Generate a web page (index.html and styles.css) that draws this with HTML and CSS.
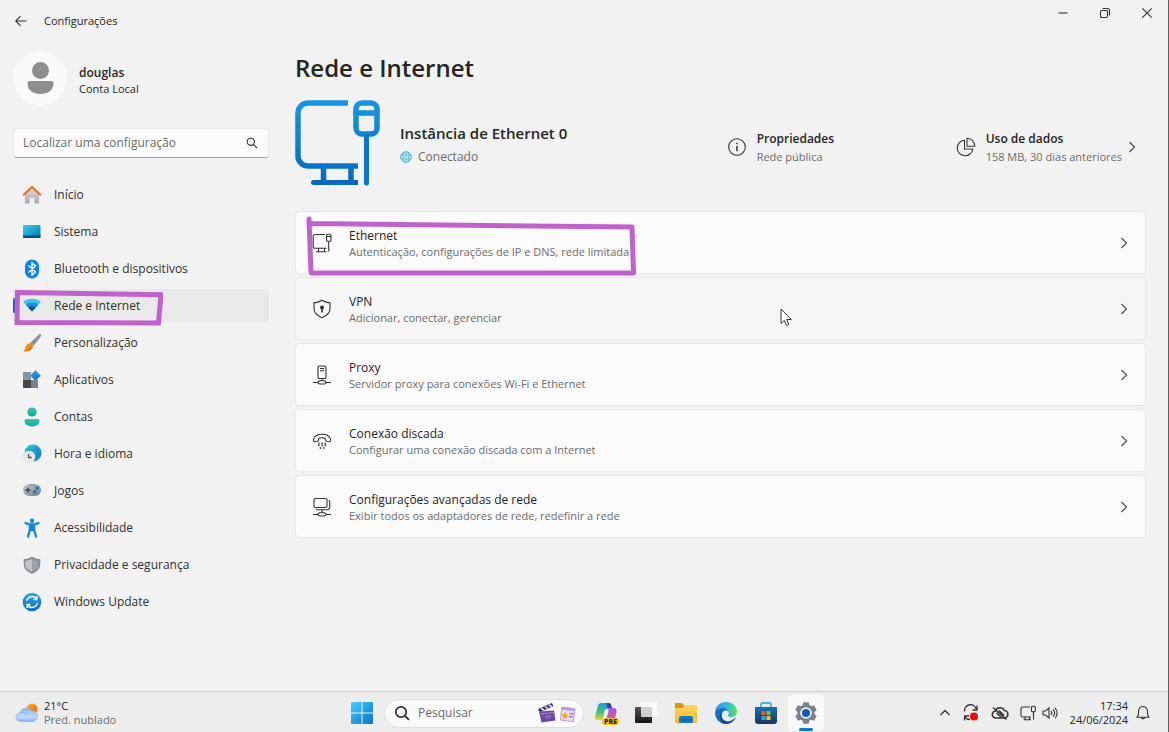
FILE: index.html
```html
<!DOCTYPE html>
<html lang="pt-BR">
<head>
<meta charset="utf-8">
<meta name="viewport" content="width=device-width, initial-scale=1">
<title>Configurações</title>
<link rel="stylesheet" href="styles.css">
</head>
<body>
<svg class="defs" width="0" height="0" aria-hidden="true">
  <defs>
    <linearGradient id="gBlue" x1="0" y1="0" x2="0" y2="1"><stop offset="0" stop-color="#2aa7ea"/><stop offset="1" stop-color="#0a6cc4"/></linearGradient>
    <linearGradient id="gHero" gradientUnits="userSpaceOnUse" x1="0" y1="0" x2="0" y2="86"><stop offset="0" stop-color="#1597e5"/><stop offset="1" stop-color="#0668bd"/></linearGradient>
    <linearGradient id="gCyan" x1="0" y1="0" x2="1" y2="1"><stop offset="0" stop-color="#35d6e4"/><stop offset="1" stop-color="#0a70b8"/></linearGradient>
    <linearGradient id="gGray" x1="0" y1="0" x2="0" y2="1"><stop offset="0" stop-color="#dcdcdc"/><stop offset="1" stop-color="#a9a9a9"/></linearGradient>
    <linearGradient id="gOrange" x1="0" y1="0" x2="1" y2="1"><stop offset="0" stop-color="#ffb42e"/><stop offset="1" stop-color="#e2600e"/></linearGradient>
    <linearGradient id="gTeal" x1="0" y1="0" x2="0" y2="1"><stop offset="0" stop-color="#2cc9b4"/><stop offset="1" stop-color="#14a88f"/></linearGradient>
    <linearGradient id="gShield" x1="0" y1="0" x2="1" y2="1"><stop offset="0" stop-color="#c9cdd1"/><stop offset="1" stop-color="#747a80"/></linearGradient>
    <linearGradient id="gCloud" x1="0" y1="0" x2="0" y2="1"><stop offset="0" stop-color="#8fb8f2"/><stop offset=".7" stop-color="#c3dafb"/><stop offset="1" stop-color="#7faaf0"/></linearGradient>
    <linearGradient id="gWin" x1="0" y1="0" x2="1" y2="1"><stop offset="0" stop-color="#48ccfb"/><stop offset="1" stop-color="#0573ce"/></linearGradient>
    <linearGradient id="gFolder" x1="0" y1="0" x2="0" y2="1"><stop offset="0" stop-color="#ffd55c"/><stop offset="1" stop-color="#fbbd2b"/></linearGradient>
    <linearGradient id="gEdge" x1="0" y1="0" x2="1" y2="0"><stop offset="0" stop-color="#1b8fdd"/><stop offset=".55" stop-color="#2bbfd9"/><stop offset="1" stop-color="#5ddf5a"/></linearGradient>
    <linearGradient id="gStore" x1="0" y1="0" x2="0" y2="1"><stop offset="0" stop-color="#1b6fb5"/><stop offset="1" stop-color="#1b355f"/></linearGradient>
    <linearGradient id="gCopA" x1="0" y1="0" x2="0" y2="1"><stop offset="0" stop-color="#1c9fe0"/><stop offset=".55" stop-color="#3fc07a"/><stop offset="1" stop-color="#f3d524"/></linearGradient>
    <linearGradient id="gCopB" x1="0" y1="0" x2="0" y2="1"><stop offset="0" stop-color="#a458e8"/><stop offset="1" stop-color="#f2567b"/></linearGradient>
    <linearGradient id="gDark" x1="0" y1="0" x2="0" y2="1"><stop offset="0" stop-color="#555"/><stop offset="1" stop-color="#151515"/></linearGradient>
  </defs>
</svg>

<div class="window">
  <header class="titlebar">
    <div class="titlebar-left">
      <button class="icon-btn" aria-label="Voltar"><svg width="12" height="12" viewBox="0 0 12 12" class="line"><path d="M11.500 6H.8M5.500 1.200.7 6l4.800 4.800"/></svg></button>
      <span class="app-title">Configurações</span>
    </div>
    <div class="controls">
      <button class="icon-btn" aria-label="Minimizar"><svg width="12" height="12" viewBox="0 0 12 12" class="line"><path d="M1.500 6h9"/></svg></button>
      <button class="icon-btn" aria-label="Restaurar"><svg width="12" height="12" viewBox="0 0 12 12" class="line"><rect x="1.500" y="3.500" width="7" height="7" rx="1.200"/><path d="M3.500 1.500H8.300a2.200 2.200 0 0 1 2.200 2.200V8.500"/></svg></button>
      <button class="icon-btn" aria-label="Fechar"><svg width="12" height="12" viewBox="0 0 12 12" class="line"><path d="M1.300 1.300l9.400 9.400M10.700 1.300l-9.400 9.400"/></svg></button>
    </div>
  </header>

  <div class="content">
    <aside class="sidebar">
      <div class="account">
        <svg width="54" height="54" viewBox="0 0 54 54" aria-hidden="true"><circle cx="27" cy="27" r="27" fill="#fafafa"/><circle cx="27.500" cy="19.500" r="8.500" fill="#8e8e8e"/><path d="M17 30h21a2.500 2.500 0 0 1 2.500 2.500C40.500 39 35 43 27.500 43s-13-4-13-10.500a2.500 2.500 0 0 1 2.500-2.500z" fill="#8e8e8e"/></svg>
        <div class="user"><div class="user-name">douglas</div><div class="user-kind">Conta Local</div></div>
      </div>
      <label class="search">
        <input type="text" placeholder="Localizar uma configuração" aria-label="Localizar uma configuração">
        <svg width="12" height="12" viewBox="0 0 12 12" class="line"><circle cx="4.800" cy="4.800" r="3.600"/><path d="M7.500 7.500l3.600 3.600"/></svg>
      </label>
      <nav class="nav">
        <a href="#"><svg width="20" height="20" viewBox="0 0 20 20"><path d="M3 9l7-6.500L17 9v9.500h-4.500V13h-5v5.500H3z" fill="url(#gGray)"/><path d="M1.700 9.800L10 2l8.300 7.800" fill="none" stroke="#e8691a" stroke-width="2" stroke-linecap="round" stroke-linejoin="round"/></svg>Início</a>
        <a href="#"><svg width="20" height="20" viewBox="0 0 20 20"><rect x="1" y="3" width="17.500" height="13" rx="1" fill="url(#gCyan)"/><path d="M1 13.500h17.500V15a1 1 0 0 1-1 1H2a1 1 0 0 1-1-1z" fill="#0b4d78"/></svg>Sistema</a>
        <a href="#"><svg width="20" height="20" viewBox="0 0 20 20"><rect x="3" y=".5" width="14" height="19" rx="7" fill="#0a84f5"/><path d="M6.500 6.500l7 6.500-3.500 3.300V3.700L13.500 7l-7 6.500" fill="none" stroke="#fff" stroke-width="1.400" stroke-linejoin="round"/></svg>Bluetooth e dispositivos</a>
        <a href="#" class="active" aria-current="page"><svg width="20" height="20" viewBox="0 1 20 20"><path d="M10 16.500L1.200 7C6 2.600 14 2.600 18.800 7z" fill="#3cc4ee"/><path d="M10 16.500L3.800 9.700c3.600-3 8.800-3 12.400 0z" fill="#148fd8"/><path d="M10 16.500L6.500 12.600c2-1.700 5-1.700 7 0z" fill="#0b559f"/></svg>Rede e Internet
          <svg class="mark" width="150" height="38" viewBox="0 0 150 38" aria-hidden="true"><path d="M4.500 4.500L148 6.800 145.500 35 4 34.500z" fill="none" stroke="#c062cc" stroke-width="5"/></svg></a>
        <a href="#"><svg width="20" height="20" viewBox="0 0 20 20"><path d="M18.800 1.300c.8.800 0 2-.6 2.900L11.500 13 8.200 9.900l7.700-7.500c.9-.9 2.200-1.700 2.900-1.100z" fill="#8b9199"/><path d="M7.500 10.300c1.800.1 3.500 1.700 3.500 3.300-.4 3.400-4.400 5.800-10 4.700 2.200-1 1.900-2.600 2.600-4.700.6-1.900 2-3.300 3.900-3.300z" fill="url(#gOrange)"/></svg>Personalização</a>
        <a href="#"><svg width="20" height="20" viewBox="0 0 20 20"><path d="M2 2h7v8H1V3a1 1 0 0 1 1-1z" fill="#8b9299"/><path d="M1 10h8v8H2a1 1 0 0 1-1-1z" fill="#41474d"/><path d="M9 10h7v7a1 1 0 0 1-1 1H9z" fill="#7b8289"/><path d="M13.500.7l5 5-5 5-5-5z" fill="url(#gBlue)" stroke="#2aa7ea" stroke-linejoin="round"/></svg>Aplicativos</a>
        <a href="#"><svg width="20" height="20" viewBox="0 0 20 20"><circle cx="10" cy="5" r="4.600" fill="url(#gTeal)"/><path d="M4.500 12h11a2 2 0 0 1 2 2c0 3.500-3.200 5.400-7.500 5.400S2.500 17.500 2.500 14a2 2 0 0 1 2-2z" fill="url(#gTeal)"/></svg>Contas</a>
        <a href="#"><svg width="20" height="20" viewBox="0 0 20 20"><circle cx="11" cy="9" r="8.500" fill="url(#gCyan)"/><path d="M3 6h16M3 12h16M8 1.500c-2 5-2 10 0 15M14 1.500c2.500 5 2.500 10 0 15" stroke="#178fcb" stroke-width=".8" fill="none"/><circle cx="7" cy="13" r="6.300" fill="#e8e8e8"/><path d="M6.600 10v3.500h3" stroke="#555" stroke-width="1.300" fill="none"/></svg>Hora e idioma</a>
        <a href="#"><svg width="20" height="20" viewBox="0 0 20 20"><rect x="1" y="3" width="18" height="12" rx="6" fill="url(#gShield)"/><path d="M6 6.500v5M3.500 9h5" stroke="#3d4248" stroke-width="1.300"/><path d="M8 4h1M11 4h1" stroke="#3d4248"/><circle cx="15" cy="7" r="1.700" fill="#0c74cc"/><circle cx="12.800" cy="11" r="1.700" fill="#0c74cc"/></svg>Jogos</a>
        <a href="#"><svg width="20" height="20" viewBox="0 0 20 20"><circle cx="10" cy="2.700" r="2.200" fill="#1484da"/><path d="M3.500 5c2 1.200 4.200 1.400 6.500 1.400S14.500 6.200 16.500 5M7.900 7v5L6 18.500M12.100 7v5l1.900 6.500" stroke="#1484da" stroke-width="2.300" fill="none" stroke-linecap="round" stroke-linejoin="round"/><path d="M7.500 6.500h5V13h-5z" fill="#1484da"/></svg>Acessibilidade</a>
        <a href="#"><svg width="20" height="20" viewBox="0 0 20 20"><path d="M10 1.500c2.600 1.800 5.300 2.600 8.300 2.700V9c0 4.500-3 7.600-8.300 9.800C4.700 16.600 1.700 13.500 1.700 9V4.200C4.700 4.100 7.400 3.300 10 1.500z" fill="#858b91"/><path d="M10 3.400v13.500C5.400 15 3.200 12.500 3.200 9V5.700C5.700 5.500 8 4.800 10 3.400z" fill="#bec3c8"/><path d="M10 3.400v13.500c4.600-1.900 6.800-4.400 6.800-7.900V5.700c-2.500-.2-4.800-.9-6.800-2.300z" fill="#9da3a9"/></svg>Privacidade e segurança</a>
        <a href="#"><svg width="20" height="20" viewBox="0 0 20 20"><circle cx="10" cy="10" r="9.300" fill="url(#gBlue)"/><path d="M4.800 9A5.300 5.300 0 0 1 14.500 7M15.200 11A5.300 5.300 0 0 1 5.500 13M14.800 4v3.400h-3.400M5.200 16v-3.400h3.400" fill="none" stroke="#fff" stroke-width="1.500"/></svg>Windows Update</a>
      </nav>
    </aside>

    <main class="main">
      <h1>Rede e Internet</h1>
      <section class="hero">
        <svg width="86" height="86" viewBox="0 0 86 86" aria-hidden="true"><g fill="none" stroke="url(#gHero)" stroke-width="5.500"><path d="M53 3H13A10 10 0 0 0 3 13V56A10 10 0 0 0 13 66H63M28.500 66V82M56 66V82"/><rect x="61" y="3" width="21" height="31" rx="6"/><path d="M61 14v-1H82v1"/></g><path d="M71.500 36V83" stroke="#0876cb" stroke-width="5" stroke-linecap="round"/><path d="M19 82.500H63" stroke="#0769be" stroke-width="5"/><path d="M18.500 82.500H21" stroke="#0769be" stroke-width="5" stroke-linecap="round"/></svg>
        <div class="hero-name">
          <h2>Instância de Ethernet 0</h2>
          <p><svg width="12" height="12" viewBox="0 0 12 12" aria-hidden="true"><circle cx="6" cy="6" r="5.300" fill="#bfeee5" stroke="#48b3d6"/><path d="M.8 4h10.400M.8 8h10.400M6 .7v10.600M4 1c-1.300 3-1.300 7 0 10M8 1c1.300 3 1.300 7 0 10" fill="none" stroke="#48b3d6" stroke-width=".7"/></svg>Conectado</p>
        </div>
        <button class="fact">
          <svg width="20" height="20" viewBox="0 0 20 20" class="line"><circle cx="10" cy="10" r="8.300"/><path d="M10 9v5.200M10 5.800v1.400" stroke-width="1.500"/></svg>
          <span><strong>Propriedades</strong><small>Rede pública</small></span>
        </button>
        <button class="fact">
          <svg width="20" height="20" viewBox="0 0 20 20" class="line"><path d="M8.500 3.200A7.800 7.800 0 1 0 16.800 12H8.500z"/><path d="M11 1.300V9.300h7.800A7.800 7.800 0 0 0 11 1.300z"/></svg>
          <span><strong>Uso de dados</strong><small>158 MB, 30 dias anteriores</small></span>
          <svg width="8" height="12" viewBox="0 0 8 12" class="chev"><path d="M1.500 1l5 5-5 5"/></svg>
        </button>
      </section>

      <section class="cards">
        <button class="card">
          <svg width="20" height="20" viewBox="0 0 20 20" class="line"><path d="M13 1.500H3A1.800 1.800 0 0 0 1.200 3.300V13.500A1.800 1.800 0 0 0 3 15.300H14.500M6.500 15.300v3.500M12.500 15.300v3.500M4 18.800H14.500M16.700 8.500v10"/><rect x="14.500" y="1.200" width="4.500" height="7" rx="1.300"/><path d="M14.500 3.500H19"/></svg>
          <span class="card-text"><b>Ethernet</b><small>Autenticação, configurações de IP e DNS, rede limitada</small></span>
          <svg width="8" height="12" viewBox="0 0 8 12" class="chev"><path d="M1.500 1l5 5-5 5"/></svg>
          <svg class="mark-wide" width="332" height="66" viewBox="0 0 332 66" aria-hidden="true"><path d="M5 7L7 60M7 11.500L328 15M328 15L329.500 60M7.500 61H329.500" fill="none" stroke="#c062cc" stroke-width="5" stroke-linecap="round"/></svg>
        </button>
        <button class="card hover">
          <svg width="20" height="20" viewBox="0 0 20 20" class="line"><path d="M10 1.300c2.500 1.700 5 2.500 8 2.600V9.500c0 4.300-3 7.200-8 9.200-5-2-8-4.900-8-9.200V3.900c3-.1 5.500-.9 8-2.600z"/><circle cx="10" cy="8.500" r="1.400" fill="#222"/><path d="M10 8.500v5" stroke-width="1.600"/></svg>
          <span class="card-text"><b>VPN</b><small>Adicionar, conectar, gerenciar</small></span>
          <svg width="8" height="12" viewBox="0 0 8 12" class="chev"><path d="M1.500 1l5 5-5 5"/></svg>
          <svg class="cursor" width="13" height="19" viewBox="0 0 13 19" aria-hidden="true"><path d="M1 1v14.500l3.300-3.100 2.200 5.100 2.300-1-2.200-5h4.700z" fill="#fff" stroke="#333" stroke-linejoin="round"/></svg>
        </button>
        <button class="card">
          <svg width="20" height="20" viewBox="0 0 20 20" class="line"><rect x="6" y="1" width="8" height="12.500" rx="1.300"/><path d="M8 3.500h4M8 5.700h4M10 13.500v2.500M1 17.500h4.500M14.500 17.500H19"/><path d="M5.500 17.500l2-1.700h5l2 1.700-2 1.500h-5z"/></svg>
          <span class="card-text"><b>Proxy</b><small>Servidor proxy para conexões Wi-Fi e Ethernet</small></span>
          <svg width="8" height="12" viewBox="0 0 8 12" class="chev"><path d="M1.500 1l5 5-5 5"/></svg>
        </button>
        <button class="card">
          <svg width="20" height="20" viewBox="0 0 20 20" class="line"><path d="M1.500 8.200C2.500 5 6 3.300 10 3.300s7.500 1.700 8.500 4.900c.3 1.400-.2 2.600-1.500 2.600l-2-.3c-1-.2-1.500-.8-1.600-1.700l-.2-1.500c-2.200-.7-4.200-.7-6.400 0l-.2 1.500c-.1.900-.6 1.500-1.600 1.700l-2 .3c-1.300 0-1.800-1.200-1.500-2.600z"/><path d="M6 12.500h1.500M9.300 12.500h1.500M12.500 12.500H14M6 14.500h1.500M9.300 14.500h1.500M12.500 14.500H14M7.700 17h1.500M11 17h1.500" stroke-width="1.400"/></svg>
          <span class="card-text"><b>Conexão discada</b><small>Configurar uma conexão discada com a Internet</small></span>
          <svg width="8" height="12" viewBox="0 0 8 12" class="chev"><path d="M1.500 1l5 5-5 5"/></svg>
        </button>
        <button class="card">
          <svg width="20" height="20" viewBox="0 0 20 20" class="line"><rect x="2" y="1.500" width="13" height="9" rx="1.500"/><path d="M16.700 3.300c.8.300 1 .8 1 1.500v5.500a2.500 2.500 0 0 1-2.500 2.500H5.500c-.8 0-1.200-.3-1.500-.8M10 13v3M1 17.500h4.500M14.500 17.500H19"/><path d="M5.500 17.500l2-1.700h5l2 1.700-2 1.500h-5z"/></svg>
          <span class="card-text"><b>Configurações avançadas de rede</b><small>Exibir todos os adaptadores de rede, redefinir a rede</small></span>
          <svg width="8" height="12" viewBox="0 0 8 12" class="chev"><path d="M1.500 1l5 5-5 5"/></svg>
        </button>
      </section>
    </main>
  </div>
</div>

<footer class="taskbar">
  <button class="weather">
    <svg width="24" height="24" viewBox="0 0 24 24" aria-hidden="true"><circle cx="17" cy="8" r="5.500" fill="url(#gOrange)"/><path d="M5.500 20.500a4.500 4.500 0 0 1-.3-9A6 6 0 0 1 16 9.800a5.400 5.400 0 0 1 2.200 10.700z" fill="url(#gCloud)" stroke="#86aeed" stroke-width=".6"/><path d="M5.500 11.500c2.500-.6 4.700.3 6 2.300" stroke="#86aeed" stroke-width=".8" fill="none"/></svg>
    <span><b>21°C</b><small>Pred. nublado</small></span>
  </button>
  <div class="apps">
    <button class="app" aria-label="Iniciar"><svg width="24" height="24" viewBox="0 0 24 24"><path d="M1 2a1 1 0 0 1 1-1h9.500v10.500H1zM12.500 1H22a1 1 0 0 1 1 1v9.500H12.500zM1 12.500h10.500V23H2a1 1 0 0 1-1-1zM12.500 12.500H23V22a1 1 0 0 1-1 1h-9.500z" fill="url(#gWin)"/></svg></button>
    <label class="task-search">
      <svg width="16" height="16" viewBox="0 0 16 16" class="line"><circle cx="7" cy="7" r="5.200" stroke-width="1.700"/><path d="M10.700 10.700l4.300 4" stroke-width="1.900"/></svg>
      <input type="text" placeholder="Pesquisar" aria-label="Pesquisar">
      <svg width="40" height="22" viewBox="0 0 40 22" aria-hidden="true"><path d="M2 9.500l15-1 1.500 10-14 2z" fill="#6a4a9c"/><path d="M1 7l14-6 1.500 3.200-14 6z" fill="#4a3277"/><path d="M4 6.200l3 2M8 4.500l3 2M12 2.800l3 2" stroke="#efe6fb" stroke-width="1.400"/><path d="M3.500 12l14-1.500" stroke="#a98bd8"/><path d="M8 15l6-.8" stroke="#8a6cc0" stroke-width="3"/><path d="M25 5l13 1.700-1.700 13L23.500 18z" fill="#e9dcf7" stroke="#b79bdb"/><path d="M25 5l13 1.700-.3 2.500-13-1.700z" fill="#b79bdb"/><path d="M32.500 11.500l4 .5M32 14.500l4 .5" stroke="#9c7bcb" stroke-width="1.300"/><path d="M28 10l1.200 2.200 2.400.4-1.700 1.800.3 2.400-2.200-1-2.200 1 .3-2.400-1.700-1.800 2.400-.4z" fill="#f6a817"/></svg>
    </label>
    <button class="app" aria-label="Copilot"><svg width="24" height="24" viewBox="0 0 24 24"><path d="M7.500 2H14c2 0 2.500 1.300 3 3l1 3h-4.500c-1.600 0-2.500.6-3 2.500L9 17c-.5 1.500-1 2-2.700 2H4c-2.500 0-3.500-1.500-2.800-4L3.800 5C4.400 3 5.500 2 7.500 2z" fill="url(#gCopA)"/><path d="M12 2h2.500c2 0 2.500 1.300 3 3l1 3H14z" fill="#2745b7"/><path d="M14 7h5.500c2.500 0 3.500 1.500 2.900 4l-1.600 7.500c-.4 2-1.500 3.500-3.500 3.500H10c1.300-.3 1.800-1.300 2.200-2.800L14.500 10z" fill="url(#gCopB)"/></svg><span class="tag">PRE</span></button>
    <button class="app" aria-label="Visão de Tarefas"><svg width="24" height="24" viewBox="0 0 24 24"><rect x="1" y="6" width="17" height="16" rx="1" fill="url(#gDark)"/><rect x="7" y="1.500" width="16" height="14.500" rx="1" fill="#fafafa"/><rect x="7" y="6" width="11" height="10" fill="#cfcfcf"/></svg></button>
    <button class="app" aria-label="Explorador de Arquivos"><svg width="24" height="24" viewBox="0 0 24 24"><path d="M1 3a1 1 0 0 1 1-1h6l2 2.500V8H1z" fill="#dc9510"/><path d="M1 7h8l2-3h11a1 1 0 0 1 1 1v16a1 1 0 0 1-1 1H2a1 1 0 0 1-1-1z" fill="url(#gFolder)"/><path d="M5 22v-5a2 2 0 0 1 2-2h10a2 2 0 0 1 2 2v5z" fill="#1779c3"/><path d="M7.500 19h9" stroke="#0b5c9e" stroke-width="1.500"/></svg></button>
    <button class="app" aria-label="Microsoft Edge"><svg width="24" height="24" viewBox="0 0 24 24"><path d="M1 12C1 5.500 6 1 12 1s11 4.200 11 9.500c0 3.500-2.700 5.500-5.700 5.500-2 0-3.500-.8-3.500-1.600 0-.7 1-1.100 1-2.700C14.800 9 12.500 7 9.500 7 5 7 1.500 9.500 1 12z" fill="url(#gEdge)"/><path d="M1 12c.5-3 4-5 8.500-5 3 0 5.300 2 5.300 4.200-.5-1-1.500-1.700-2.900-1.700-2.500 0-4.400 2-4.400 4.700 0 4.500 4.500 7.500 9 6.600C15 22 13.500 23 12 23 6 23 1 18 1 12z" fill="#1370ca"/><path d="M7.500 14.200c0 4.500 4.200 6.800 8.500 5.800 2-.5 3.600-1.600 5-3 .4-.4.8 0 .5.500C19.500 21 16 23 12 23c-4 0-6.500-3.600-6.500-7.500 0-2.500 1.700-5 4-5.500-1.200.8-2 2.500-2 4.200z" fill="#114c9b"/></svg></button>
    <button class="app" aria-label="Microsoft Store"><svg width="24" height="24" viewBox="0 0 24 24"><path d="M7 6V3.500A1.500 1.500 0 0 1 8.500 2h7A1.500 1.500 0 0 1 17 3.500V6" stroke="#35b8ef" stroke-width="1.800" fill="none"/><path d="M1 6h22v14a3 3 0 0 1-3 3H4a3 3 0 0 1-3-3z" fill="url(#gStore)"/><path d="M7.500 10h4v4h-4z" fill="#f0552a"/><path d="M12.500 10h4v4h-4z" fill="#82bd25"/><path d="M7.500 15h4v4h-4z" fill="#23a9ec"/><path d="M12.500 15h4v4h-4z" fill="#fdbb1d"/></svg></button>
    <button class="app current" aria-label="Configurações"><svg width="24" height="24" viewBox="0 0 24 24"><g fill="#78818a"><circle cx="12" cy="12" r="8.500"/><path id="tooth" d="M9.300 1.200h5.400l1 5H8.300zM9.300 22.800h5.400l1-5H8.300z"/><use href="#tooth" transform="rotate(60 12 12)"/><use href="#tooth" transform="rotate(120 12 12)"/></g><circle cx="12" cy="12" r="5.800" fill="#f3f6f9"/><circle cx="12" cy="12" r="4" fill="#0d5cad"/></svg></button>
  </div>
  <div class="tray">
    <button class="icon-btn" aria-label="Mostrar ícones ocultos"><svg width="12" height="12" viewBox="0 0 12 12" class="line"><path d="M1.500 8L6 3.500 10.500 8" stroke-width="1.300"/></svg></button>
    <button class="icon-btn" aria-label="Atualização"><svg width="18" height="18" viewBox="0 0 18 18" class="line"><path d="M2.500 7.500A6 6 0 0 1 14.500 6M15 1.500V6h-4.500M2.500 16.500V12H7M2.500 12.500A6 6 0 0 0 8 15.500" stroke-width="1.300"/><circle cx="12" cy="12.500" r="4" fill="#f80808" stroke="none"/></svg></button>
    <button class="icon-btn" aria-label="OneDrive"><svg width="18" height="18" viewBox="0 0 18 18" class="line"><path d="M5 14a3.500 3.500 0 0 1-.5-7A4.700 4.700 0 0 1 13.300 6.500 3.700 3.700 0 0 1 13 14z" stroke-width="1.600"/><path d="M2 3.500L15.500 15.500M5.500 9l5 4.500M8 6.500l5 5" stroke-width="1.500"/></svg></button>
    <button class="icon-btn pair" aria-label="Rede e volume"><svg width="16" height="16" viewBox="0 0 16 16" class="line"><path d="M10 2H2.500A1.500 1.500 0 0 0 1 3.500v7A1.500 1.500 0 0 0 2.500 12H11M5 12v2.500M9.500 12v2.500M3.500 14.700H11M13.500 7v7.500"/><rect x="11.500" y="1.200" width="3.800" height="5.500" rx="1"/></svg><svg width="16" height="16" viewBox="0 0 16 16" class="line"><path d="M1 6h2.500L7 3v10L3.500 10H1zM9 6c1 1.200 1 2.800 0 4M11 4.300c2 2.200 2 5.200 0 7.400M13 2.800c2.800 3 2.800 7.400 0 10.400"/></svg></button>
    <button class="clock"><span>17:34</span><span>24/06/2024</span></button>
    <button class="icon-btn" aria-label="Notificações"><svg width="14" height="16" viewBox="0 0 14 16" class="line"><path d="M7 1.500A4.500 4.500 0 0 0 2.500 6v3.500L1 12.300h12L11.500 9.500V6A4.500 4.500 0 0 0 7 1.500zM5.300 12.500a1.800 1.800 0 0 0 3.400 0"/></svg></button>
  </div>
</footer>
</body>
</html>
```
FILE: styles.css
```css
* { box-sizing: border-box; }

body {
  margin: 0;
  min-height: 100vh;
  display: flex;
  flex-direction: column;
  background: #f2f2f2;
  border-right: 1px solid #5f5f5f;
  color: #252525;
  font: 12px/16px "Open Sans", "Noto Sans", sans-serif;
}

button, input {
  font: inherit;
  color: inherit;
  background: none;
  border: 0;
  padding: 0;
  margin: 0;
}

button { text-align: left; }
h1, h2, p { margin: 0; }
svg { flex: none; display: block; }
small { font-size: 11px; color: #6c6c6c; }
b { font-weight: 400; }

.defs { position: absolute; }
.line { fill: none; stroke: #333; stroke-width: 1.1; }
.chev { fill: none; stroke: #555; stroke-width: 1.3; }

.window { flex: 1; display: flex; flex-direction: column; }

.titlebar {
  display: flex;
  justify-content: space-between;
  height: 42px;
  padding: 0 15px;
}
.titlebar-left { display: flex; align-items: center; gap: 17px; }
.app-title { font-size: 11px; }
.controls { display: flex; gap: 30px; height: 26px; align-items: center; }
.icon-btn { display: flex; align-items: center; }

.content { flex: 1; display: flex; gap: 26px; padding: 0 22px 0 13px; }

.sidebar { width: 256px; flex: none; padding-top: 9px; }
.account { display: flex; align-items: center; gap: 12px; }
.user { padding-top: 5px; }
.user-name { font-weight: 600; }
.user-kind { font-size: 11px; }

.search {
  display: flex;
  align-items: center;
  height: 30px;
  margin: 23px 0 20px;
  padding: 0 10px 0 9px;
  background: #fbfbfb;
  border: 1px solid #e6e6e6;
  border-bottom-color: #a0a0a0;
  border-radius: 4px;
}
input { flex: 1; min-width: 0; outline: 0; }
input::placeholder { color: #6b6b6b; opacity: 1; }

.nav { display: flex; flex-direction: column; gap: 4px; }
.nav a {
  position: relative;
  display: flex;
  align-items: center;
  gap: 12px;
  height: 33px;
  padding: 0 9px;
  border-radius: 4px;
  color: #303030;
  text-decoration: none;
}
.nav .active { background: #e9e9e9; }
.nav .active::before {
  content: "";
  position: absolute;
  left: 0;
  top: 9px;
  width: 3px;
  height: 15px;
  border-radius: 2px;
  background: #0067c0;
}
.mark { position: absolute; left: 0; top: -1px; }

.main { flex: 1; min-width: 0; padding-top: 10px; }
h1 { font-size: 24px; line-height: 32px; font-weight: 600; }

.hero {
  display: grid;
  grid-template-columns: auto 1fr 229px auto;
  align-items: center;
  margin: 16px 0 25px;
  padding-right: 10px;
}
.hero-name { padding-left: 19px; }
h2 { font-size: 15px; line-height: 22px; font-weight: 600; }
.hero-name p { display: flex; align-items: center; gap: 6px; margin-top: 5px; color: #6c6c6c; }
.fact { display: flex; align-items: center; gap: 6px; padding-top: 8px; }
.fact span { padding-left: 4px; }
.fact strong, .fact small { display: block; }
.fact strong { font-weight: 600; line-height: 20px; }

.cards { display: flex; flex-direction: column; gap: 3px; }
.card {
  position: relative;
  display: flex;
  align-items: center;
  gap: 17px;
  min-height: 63px;
  padding: 8px 17px 8px 16px;
  background: #fbfbfb;
  border: 1px solid #e8e8e8;
  border-radius: 4px;
}
.card.hover { background: #f6f6f6; }
.card-text { flex: 1; padding-top: 3px; }
.card-text b, .card-text small { display: block; }
.mark-wide { position: absolute; left: 8px; top: 0; }
.cursor { position: absolute; left: 57%; top: 30px; }

.taskbar {
  display: grid;
  grid-template-columns: 1fr auto 1fr;
  align-items: center;
  height: 41px;
  padding: 2px 15px 0 15px;
  background: #ededed;
  border-top: 1px solid #cfcfcf;
}
.weather { display: flex; align-items: center; gap: 5px; }
.weather b, .weather small { display: block; line-height: 14px; font-size: 11px; }
.apps { display: flex; align-items: center; gap: 4px; }
.app {
  position: relative;
  display: flex;
  align-items: center;
  justify-content: center;
  width: 36px;
  height: 36px;
  border-radius: 4px;
}
.app.current { background: #f9f9f9; }
.app.current::after {
  content: "";
  position: absolute;
  left: 11px;
  right: 11px;
  bottom: 0;
  height: 3px;
  border-radius: 2px;
  background: #0b78d0;
}
.tag {
  position: absolute;
  right: 5px;
  bottom: 6px;
  padding: 0 2px;
  border-radius: 3px;
  background: #fcc419;
  color: #222;
  font-size: 7px;
  line-height: 7px;
  font-weight: 800;
}
.task-search {
  display: flex;
  align-items: center;
  gap: 8px;
  width: 200px;
  height: 29px;
  padding: 0 6px 0 9px;
  background: #fafafa;
  border: 1px solid #dedede;
  border-radius: 15px;
}
.tray { display: flex; align-items: center; justify-content: flex-end; gap: 5px; }
.tray .icon-btn { padding: 0 3px; }
.tray .pair { gap: 6px; }
.clock { display: flex; flex-direction: column; align-items: flex-end; padding-left: 4px; font-size: 11px; line-height: 14px; }
```
